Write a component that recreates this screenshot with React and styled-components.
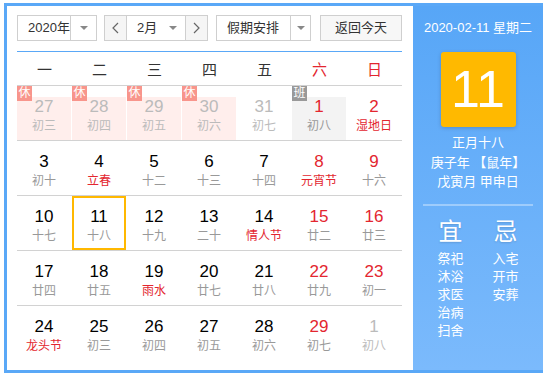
import React from 'react';
import styled, { createGlobalStyle } from 'styled-components';

const GlobalStyle = createGlobalStyle`
  body {
    margin: 0;
    font-family: "Liberation Sans", "Noto Sans CJK SC", sans-serif;
    background: #fff;
  }
`;

const Widget = styled.div`
  margin: 3px 0 0 4px;
  width: 539px;
  height: 370px;
  box-sizing: border-box;
  border: 3px solid #5aa8f7;
  border-right: 0;
  display: flex;
`;

const LeftPanel = styled.div`
  width: 406px;
  box-sizing: border-box;
  padding: 9px 11px 0 10px;
`;

const Toolbar = styled.div`
  display: flex;
  height: 26px;
  gap: 7px;
  font-size: 13px;
  color: #333;
`;

const Box = styled.div`
  display: flex;
  width: ${(p) => p.$w}px;
  margin-left: ${(p) => p.$ml || 0}px;
  box-sizing: border-box;
  border: 1px solid #cfcfcf;
  background: #fff;
`;

const Label = styled.div`
  flex: 1;
  padding-left: ${(p) => p.$pl || 10}px;
  line-height: 24px;
`;

const ArrowArea = styled.div`
  width: ${(p) => p.$w || 24}px;
  display: flex;
  align-items: center;
  justify-content: center;
  border-left: ${(p) => (p.$divider ? '1px solid #cfcfcf' : '0')};

  &::after {
    content: '';
    border-left: 4px solid transparent;
    border-right: 4px solid transparent;
    border-top: 4px solid #888;
  }
`;

const NavButton = styled.div`
  width: 21px;
  display: flex;
  align-items: center;
  justify-content: center;
  background: #f5f5f5;
  border-left: ${(p) => (p.$side === 'right' ? '1px solid #cfcfcf' : '0')};
  border-right: ${(p) => (p.$side === 'left' ? '1px solid #cfcfcf' : '0')};
`;

const TodayButton = styled.div`
  width: 82px;
  margin-left: 2px;
  box-sizing: border-box;
  border: 1px solid #cfcfcf;
  background: #f7f7f7;
  text-align: center;
  line-height: 24px;
`;

const BlueLine = styled.div`
  margin-top: 10px;
  height: 1px;
  background: #5aa8f7;
`;

const WeekHeader = styled.div`
  display: grid;
  grid-template-columns: repeat(7, 55px);
  height: 33px;
  align-items: center;
  text-align: center;
  font-size: 15px;
`;

const WeekDay = styled.div`
  color: ${(p) => (p.$weekend ? '#e3262f' : '#333')};
`;

const Row = styled.div`
  display: grid;
  grid-template-columns: repeat(7, 55px);
  height: 55px;
  box-sizing: border-box;
  border-top: ${(p) => (p.$noTop ? '0' : '1px solid #d2d2d2')};
`;

const Cell = styled.div`
  position: relative;
  display: flex;
  flex-direction: column;
  align-items: center;
  padding: 11px 1px 0 0;
  box-sizing: border-box;
  background-clip: content-box;
  background-color: ${(p) =>
    p.$kind === 'rest' ? '#ffeeec' : p.$kind === 'work' ? '#f3f3f3' : 'transparent'};

  ${(p) =>
    p.$selected &&
    `
    &::after {
      content: '';
      position: absolute;
      top: 0;
      left: 0;
      right: 1px;
      bottom: 0;
      border: 2px solid #ffb800;
    }
  `}
`;

const Num = styled.div`
  font-size: 17px;
  line-height: 20px;
  color: ${(p) => (p.$other ? '#bbb' : p.$red ? '#e3262f' : '#000')};
`;

const Lunar = styled.div`
  font-size: 12px;
  line-height: 18px;
  color: ${(p) => (p.$other ? '#bbb' : p.$red ? '#e3262f' : '#999')};
`;

const Badge = styled.div`
  position: absolute;
  top: 0;
  left: 0;
  width: 15px;
  height: 15px;
  font-size: 12px;
  line-height: 15px;
  text-align: center;
  color: #fff;
  background: ${(p) => (p.$work ? '#999' : '#f8958c')};
`;

const RightPanel = styled.div`
  flex: 1;
  background: linear-gradient(180deg, #57a6f7 0%, #7bbafc 100%);
  color: #fff;
  text-align: center;
  padding-top: 13px;
  box-sizing: border-box;
`;

const DateLine = styled.div`
  font-size: 13px;
  line-height: 18px;
`;

const BigDay = styled.div`
  width: 75px;
  height: 75px;
  margin: 15px auto 0;
  background: #ffb900;
  border-radius: 3px;
  box-shadow: 0 1px 4px rgba(0, 0, 0, 0.18);
  font-size: 52px;
  line-height: 75px;
  font-weight: 300;
`;

const LunarInfo = styled.div`
  margin-top: 6px;
  font-size: 13px;
  line-height: 19.5px;
`;

const Divider = styled.div`
  margin: 12px 10px 0;
  height: 2px;
  background: rgba(255, 255, 255, 0.35);
`;

const Advice = styled.div`
  display: grid;
  grid-template-columns: 55px 55px;
  margin: 11px 10px 0;
`;

const AdviceCol = styled.div`
  display: flex;
  flex-direction: column;
  align-items: center;
`;

const AdviceTitle = styled.div`
  font-size: 24px;
  line-height: 30px;
  margin-bottom: 3px;
  text-shadow: 0 1px 2px rgba(0, 0, 0, 0.15);
`;

const AdviceItem = styled.div`
  font-size: 13px;
  line-height: 18px;
`;

const Chevron = ({ dir }) => (
  <svg width="7" height="12" viewBox="0 0 7 12">
    <polyline
      points={dir === 'left' ? '6,1 1,6 6,11' : '1,1 6,6 1,11'}
      fill="none"
      stroke="#666"
      strokeWidth="1.2"
    />
  </svg>
);

const weeks = ['一', '二', '三', '四', '五', '六', '日'];

// n: number, l: lunar text, o: other month, r: red number, lr: red lunar, b: badge
const rows = [
  [
    { n: 27, l: '初三', o: 1, b: 'rest' },
    { n: 28, l: '初四', o: 1, b: 'rest' },
    { n: 29, l: '初五', o: 1, b: 'rest' },
    { n: 30, l: '初六', o: 1, b: 'rest' },
    { n: 31, l: '初七', o: 1 },
    { n: 1, l: '初八', r: 1, b: 'work' },
    { n: 2, l: '湿地日', r: 1, lr: 1 },
  ],
  [
    { n: 3, l: '初十' },
    { n: 4, l: '立春', lr: 1 },
    { n: 5, l: '十二' },
    { n: 6, l: '十三' },
    { n: 7, l: '十四' },
    { n: 8, l: '元宵节', r: 1, lr: 1 },
    { n: 9, l: '十六', r: 1 },
  ],
  [
    { n: 10, l: '十七' },
    { n: 11, l: '十八', sel: 1 },
    { n: 12, l: '十九' },
    { n: 13, l: '二十' },
    { n: 14, l: '情人节', lr: 1 },
    { n: 15, l: '廿二', r: 1 },
    { n: 16, l: '廿三', r: 1 },
  ],
  [
    { n: 17, l: '廿四' },
    { n: 18, l: '廿五' },
    { n: 19, l: '雨水', lr: 1 },
    { n: 20, l: '廿七' },
    { n: 21, l: '廿八' },
    { n: 22, l: '廿九', r: 1 },
    { n: 23, l: '初一', r: 1 },
  ],
  [
    { n: 24, l: '龙头节', lr: 1 },
    { n: 25, l: '初三' },
    { n: 26, l: '初四' },
    { n: 27, l: '初五' },
    { n: 28, l: '初六' },
    { n: 29, l: '初七', r: 1 },
    { n: 1, l: '初八', o: 1 },
  ],
];

const good = ['祭祀', '沐浴', '求医', '治病', '扫舍'];
const bad = ['入宅', '开市', '安葬'];

export default function App() {
  return (
    <>
      <GlobalStyle />
      <Widget>
        <LeftPanel>
          <Toolbar>
            <Box $w={80}>
              <Label>2020年</Label>
              <ArrowArea $w={25} $divider />
            </Box>
            <Box $w={104}>
              <NavButton $side="left">
                <Chevron dir="left" />
              </NavButton>
              <Label>2月</Label>
              <ArrowArea $w={24} />
              <NavButton $side="right">
                <Chevron dir="right" />
              </NavButton>
            </Box>
            <Box $w={95} $ml={1}>
              <Label>假期安排</Label>
              <ArrowArea $w={19} $divider />
            </Box>
            <TodayButton>返回今天</TodayButton>
          </Toolbar>
          <BlueLine />
          <WeekHeader>
            {weeks.map((w, i) => (
              <WeekDay key={w} $weekend={i >= 5}>
                {w}
              </WeekDay>
            ))}
          </WeekHeader>
          {rows.map((row, ri) => (
            <Row key={ri}>
              {row.map((d, ci) => (
                <Cell key={ci} $kind={d.b} $selected={d.sel}>
                  {d.b && <Badge $work={d.b === 'work'}>{d.b === 'work' ? '班' : '休'}</Badge>}
                  <Num $other={d.o} $red={d.r}>
                    {d.n}
                  </Num>
                  <Lunar $other={d.o} $red={d.lr}>
                    {d.l}
                  </Lunar>
                </Cell>
              ))}
            </Row>
          ))}
        </LeftPanel>
        <RightPanel>
          <DateLine>2020-02-11 星期二</DateLine>
          <BigDay>11</BigDay>
          <LunarInfo>
            <div>正月十八</div>
            <div>庚子年 【鼠年】</div>
            <div>戊寅月 甲申日</div>
          </LunarInfo>
          <Divider />
          <Advice>
            <AdviceCol>
              <AdviceTitle>宜</AdviceTitle>
              {good.map((g) => (
                <AdviceItem key={g}>{g}</AdviceItem>
              ))}
            </AdviceCol>
            <AdviceCol>
              <AdviceTitle>忌</AdviceTitle>
              {bad.map((g) => (
                <AdviceItem key={g}>{g}</AdviceItem>
              ))}
            </AdviceCol>
          </Advice>
        </RightPanel>
      </Widget>
    </>
  );
}
